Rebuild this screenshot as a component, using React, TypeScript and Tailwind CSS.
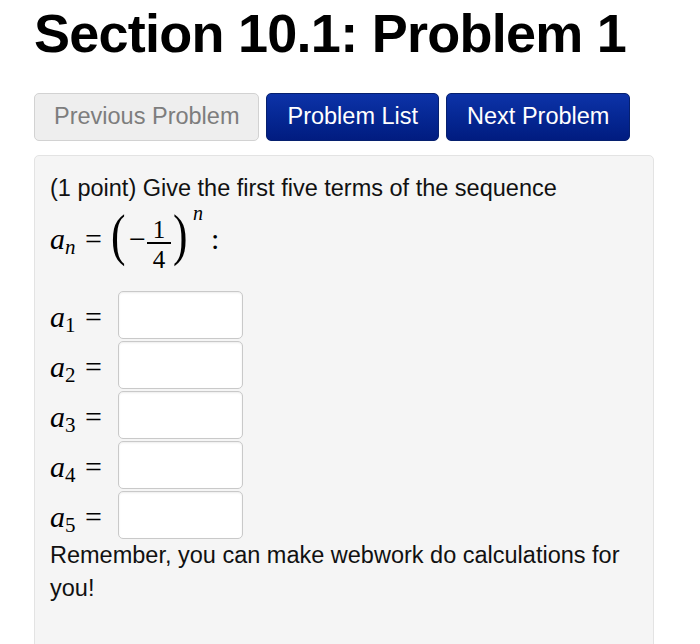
import React from "react";

const terms = [1, 2, 3, 4, 5];

function NavButton({ label, active }: { label: string; active?: boolean }) {
  if (!active) {
    return (
      <button className="h-[48px] px-[19px] rounded-[5px] border border-[#d2d2d2] bg-[#eeeeee] text-[23.5px] text-[#7d7d7d]">
        {label}
      </button>
    );
  }
  return (
    <button className="h-[48px] px-[20px] rounded-[5px] border border-[#06206f] bg-gradient-to-b from-[#0d33a8] to-[#011c80] text-[23.5px] text-white">
      {label}
    </button>
  );
}

export default function App() {
  return (
    <div className="min-h-screen bg-white px-[34px] pt-[4px] font-['Liberation_Sans',Arial,sans-serif]">
      <h1 className="text-[54px] leading-[59px] font-bold tracking-[-0.75px] text-black">
        Section 10.1: Problem 1
      </h1>

      <div className="mt-[30px] flex gap-[7px]">
        <NavButton label="Previous Problem" />
        <NavButton label="Problem List" active />
        <NavButton label="Next Problem" active />
      </div>

      <div className="mt-[14px] w-[620px] rounded-[5px] border border-[#e3e3e3] bg-[#f5f5f5] px-[15px] pt-[16px] pb-[50px] text-[23.5px] leading-[33px] text-[#111]">
        <p>(1 point) Give the first five terms of the sequence</p>

        {/* a_n = (-1/4)^n : */}
        <div className="flex h-[72px] items-center font-['Liberation_Serif','Times_New_Roman',serif] leading-none text-black">
          <span className="w-[35px] mb-[5px] text-[30px] italic">
            a<sub className="text-[21px]">n</sub>
          </span>
          <span className="w-[26px] mb-[5px] text-[30px]">=</span>
          <span className="mb-[12px] w-[16px] origin-left scale-x-75 text-[58px]">(</span>
          <span className="ml-[2px] mb-[5px] text-[30px]">−</span>
          <span className="ml-[1px] mt-[7px] flex w-[24px] flex-col items-center text-[25px]">
            <span className="leading-[25px]">1</span>
            <span className="h-[1.5px] w-full bg-black" />
            <span className="mt-[3.5px] leading-[25px]">4</span>
          </span>
          <span className="ml-[2px] mb-[12px] w-[16px] origin-left scale-x-75 text-[58px]">)</span>
          <span className="ml-[4px] -mt-[2px] self-start text-[20px] italic">n</span>
          <span className="ml-[8px] mb-[5px] text-[30px]">:</span>
        </div>

        <div className="mt-[14px] flex flex-col gap-[2px]">
          {terms.map((k) => (
            <div key={k} className="flex h-[48px] items-center">
              <span className="mt-[4px] w-[35px] font-['Liberation_Serif','Times_New_Roman',serif] text-[30px] leading-none italic text-black">
                a<sub className="text-[21px] not-italic">{k}</sub>
              </span>
              <span className="mt-[4px] w-[33px] font-['Liberation_Serif','Times_New_Roman',serif] text-[30px] leading-none text-black">
                =
              </span>
              <input
                type="text"
                className="h-[48px] w-[125px] rounded-[5px] border border-[#c9c9c9] bg-white shadow-[inset_0_1px_2px_rgba(0,0,0,0.08)] outline-none"
              />
            </div>
          ))}
        </div>

        <p>Remember, you can make webwork do calculations for you!</p>
      </div>
    </div>
  );
}
